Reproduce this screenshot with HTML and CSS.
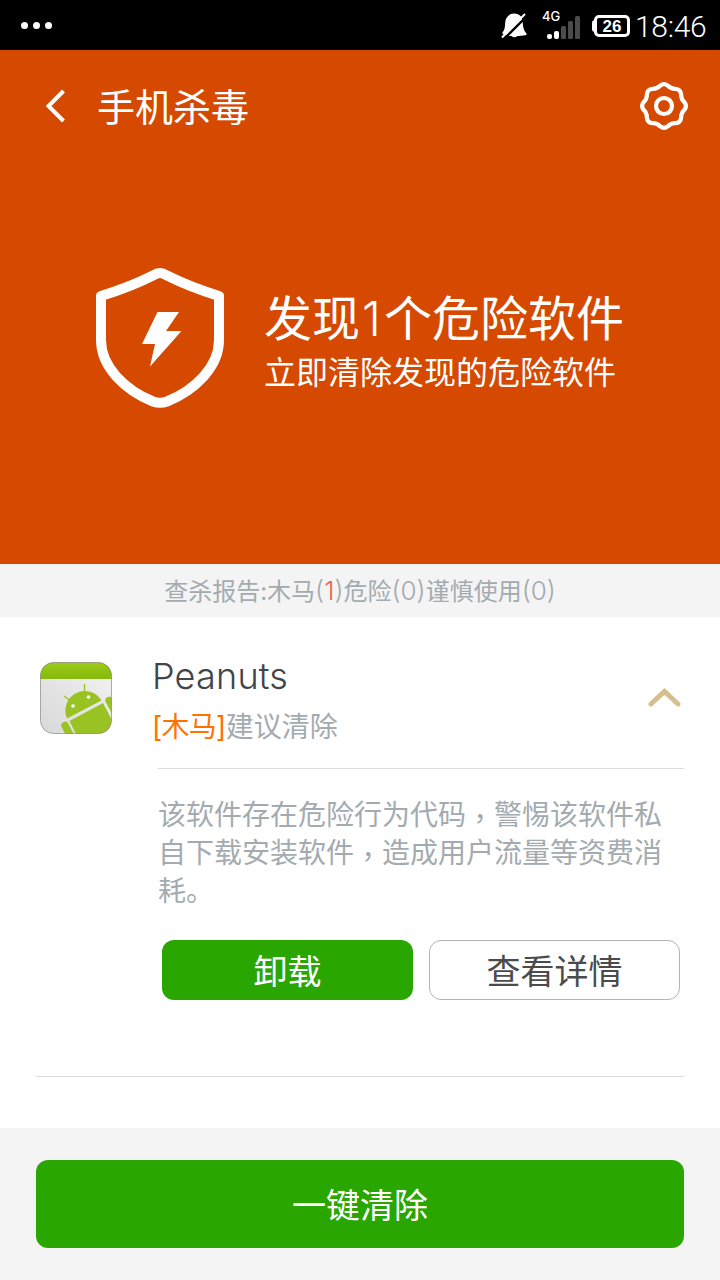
FILE: index.html
```html
<!DOCTYPE html>
<html lang="zh-CN">
<head>
<meta charset="utf-8">
<title>手机杀毒</title>
<link rel="stylesheet" href="styles.css">
</head>
<body>
<div class="screen">
  <div class="status">
    <svg class="dots" width="32" height="8" viewBox="0 0 32 8" fill="#fff"><circle cx="3.500" cy="3.500" r="3.500"/><circle cx="15.500" cy="3.500" r="3.500"/><circle cx="27.500" cy="3.500" r="3.500"/></svg>
    <svg class="mute" width="28" height="28" viewBox="0 0 28 28">
      <path fill="#fff" d="M2.500 20.500C6.500 16 4 10 6.500 6Q9 1.500 14 1.500Q18.500 1.500 21 4.500C24 10 21.500 16.500 26.500 21.500V23Q20 24 17.500 24Q14 26.500 11.500 24Q6 24 2.500 22Z"/>
      <path stroke="#000" stroke-width="2.400" d="M4 27L27 4"/>
      <path stroke="#fff" stroke-width="2" d="M2 25.500L25 2"/>
    </svg>
    <div class="signal">
      <span class="network">4G</span>
      <svg width="34" height="24" viewBox="0 0 34 24"><g fill="#fff"><rect x="5" y="18" width="5" height="5" rx="2"/><rect x="12" y="15" width="5" height="8" rx="2"/></g><g fill="#4b4b4b"><rect x="19" y="10" width="5" height="13" rx="1.500"/><rect x="26" y="5" width="5" height="18" rx="1.500"/><rect x="33" y="0" width="5" height="23" rx="1.500"/></g></svg>
    </div>
    <div class="battery">26</div>
    <div class="clock">18:46</div>
  </div>
  <header class="hero">
    <div class="bar">
      <svg class="back" width="22" height="36" viewBox="0 0 22 36" fill="none" stroke="#fff" stroke-width="4"><path d="M19.500 3L4.500 18L19.500 33"/></svg>
      <h1 class="heading">手机杀毒</h1>
      <svg class="gear" width="50" height="50" viewBox="-25 -25 50 50" fill="none" stroke="#fff" stroke-width="4.200"><path d="M-4.020-20.200Q0-23.600 4.020-20.200Q7.040-17 11.450-17.130Q16.690-16.690 17.130-11.450Q17-7.040 20.200-4.020Q23.600 0 20.200 4.020Q17 7.040 17.130 11.450Q16.690 16.690 11.450 17.130Q7.040 17 4.020 20.200Q0 23.600-4.020 20.200Q-7.040 17-11.450 17.130Q-16.690 16.690-17.130 11.450Q-17 7.040-20.200 4.020Q-23.600 0-20.200-4.020Q-17-7.040-17.130-11.450Q-16.690-16.690-11.450-17.130Q-7.040-17-4.020-20.200Z"/><circle r="8"/></svg>
    </div>
    <div class="alert">
      <svg class="shield" width="128" height="142" viewBox="16 17 128 142"><path fill="none" stroke="#fff" stroke-width="10" stroke-linejoin="round" d="M80 23Q77 23 73 25.500Q50 37 21 46V90C21 117 45 140 73 151.500Q80 154 87 151.500C115 140 139 117 139 90V46Q110 37 87 25.500Q83 23 80 23Z"/><path fill="#fff" d="M77.500 62H99L86 81H101.500L70 116.500L75 94H62Z"/></svg>
      <div class="message">
        <div class="found">发现<span class="digit">1</span>个危险软件</div>
        <div class="advice">立即清除发现的危险软件</div>
      </div>
    </div>
  </header>
  <div class="report">查杀报告:木马<span class="num">(<span class="count">1</span>)</span>危险<span class="num">(0)</span>谨慎使用<span class="num">(0)</span></div>
  <main class="list">
    <section class="item">
      <div class="summary">
        <svg class="app" width="72" height="73" viewBox="0 0 72 73">
          <defs>
            <clipPath id="tile"><rect x="0.500" y="0.500" width="71" height="71" rx="13"/></clipPath>
            <linearGradient id="paper" x1="1" y1="0" x2="0" y2="1"><stop offset="0" stop-color="#f3f3f3"/><stop offset="1" stop-color="#d8d8d8"/></linearGradient>
            <linearGradient id="band" x1="0" y1="0" x2="0" y2="1"><stop offset="0" stop-color="#9ccb17"/><stop offset="1" stop-color="#86b90e"/></linearGradient>
          </defs>
          <g clip-path="url(#tile)">
            <rect width="72" height="73" fill="url(#paper)"/>
            <rect width="72" height="17" fill="url(#band)"/>
            <g fill="#99c322">
              <path d="M27 56.500A19.500 19.500 0 0 1 61.500 38.500Z"/>
              <path d="M29.500 59L63 41L80 73V80H40Z"/>
            </g>
            <path fill="none" stroke="#99c322" stroke-width="7.500" stroke-linecap="round" d="M25 63.500L33.500 79.500M69 38.500L77.500 54"/>
            <path stroke="#99c322" stroke-width="1.400" d="M44.500 31V22M31 39L24 34"/>
            <circle cx="48.500" cy="35" r="1.800" fill="#fff"/><circle cx="33" cy="44" r="1.800" fill="#fff"/>
          </g>
          <rect x="0.500" y="0.500" width="71" height="71" rx="13" fill="none" stroke="#777" stroke-opacity="0.600"/>
        </svg>
        <div class="info">
          <div class="name">Peanuts</div>
          <div class="verdict"><span class="tag">[木马]</span>建议清除</div>
        </div>
        <svg class="chevron" width="34" height="22" viewBox="0 0 34 22" fill="none" stroke="#d5bf8c" stroke-width="5"><path stroke-linecap="round" d="M4 18L17.500 5.500L31 18"/></svg>
      </div>
      <div class="detail">
        <p class="description">该软件存在危险行为代码<span class="comma" lang="zh-TW">，</span>警惕该软件私自下载安装软件<span class="comma" lang="zh-TW">，</span>造成用户流量等资费消耗。</p>
        <div class="actions">
          <button class="button primary">卸载</button>
          <button class="button secondary">查看详情</button>
        </div>
      </div>
    </section>
  </main>
  <footer class="footer"><button class="button primary clean">一键清除</button></footer>
</div>
</body>
</html>
```

FILE: styles.css
```css
* { box-sizing: border-box; }
body { margin: 0; background: #fff; font-family: Inter, "Noto Sans CJK SC", sans-serif; }
svg { display: block; flex: none; }
.screen { width: 720px; height: 1280px; display: flex; flex-direction: column; overflow: hidden; }
.status { height: 50px; flex: none; background: #000; color: #fff; display: flex; align-items: center; padding: 2px 12px 0 21px; }
.mute { margin-left: auto; }
.signal { width: 40px; height: 30px; margin: 0 12px 0 14px; padding-top: 5px; position: relative; }
.signal svg { overflow: visible; }
.network { position: absolute; left: 0; top: -2px; font: 500 13px/14px Inter, sans-serif; }
.battery { width: 36px; height: 22px; margin-right: 5px; border: 3px solid #fff; border-radius: 5px; font: bold 17px/17px "Liberation Sans", sans-serif; text-align: center; position: relative; }
.battery::before { content: ""; position: absolute; left: -5px; top: 2px; width: 4px; height: 12px; border-radius: 3px 0 0 3px; background: #fff; }
.clock { width: 73px; padding-top: 2px; font: 300 30px/36px Roboto, sans-serif; letter-spacing: -0.3px; white-space: nowrap; }
.hero { height: 514px; flex: none; background: #d54900; color: #fff; }
.bar { height: 112px; display: flex; align-items: center; padding: 0 31px 0 44px; }
.heading { margin: 0 auto 0 31px; padding-top: 1px; font-size: 38px; line-height: 50px; font-weight: 400; }
.alert { display: flex; gap: 40px; padding: 105px 0 0 96px; }
.message { padding-top: 22px; white-space: nowrap; }
.found { font-size: 48px; line-height: 60px; }
.digit { font-weight: 300; padding: 0 3px 0 2px; }
.advice { font-size: 32px; line-height: 48px; }
.report { height: 53px; flex: none; background: #f4f4f4; color: #a3abb0; font-size: 24px; line-height: 55px; text-align: center; white-space: nowrap; }
.num { font-size: 26px; font-weight: 300; line-height: 30px; }
.count { color: #f0604e; }
.list { height: 511px; flex: none; padding: 0 36px; }
.item { height: 460px; border-bottom: 1px solid #dcdcdc; }
.summary { display: flex; height: 151px; padding: 45px 3px 0 4px; }
.info { margin: -6px auto 0 40px; }
.name { color: #41444b; font-size: 36px; line-height: 40px; font-weight: 300; letter-spacing: 0.2px; }
.verdict { color: #a3abb0; font-size: 28px; line-height: 40px; margin-top: 11px; }
.tag { color: #ff7200; letter-spacing: -0.7px; }
.chevron { margin-top: 24px; }
.detail { margin-left: 122px; border-top: 1px solid #dcdcdc; padding-top: 25px; }
.description { margin: 0 0 32px; color: #a3abb0; font-family: "Noto Sans CJK SC", sans-serif; font-size: 28px; line-height: 38px; width: 510px; }
.comma { font-family: "Noto Sans CJK TC", sans-serif; line-height: 28px; vertical-align: -4px; }
.actions { display: grid; grid-template-columns: 251px 251px; gap: 16px; padding-left: 4px; }
.button { height: 60px; padding: 3px 0 0; border: 0; border-radius: 12px; font: 34px/44px Inter, "Noto Sans CJK SC", sans-serif; }
.primary { background: #2aa600; color: #fff; }
.secondary { background: #fff; color: #4b4b4b; border: 1px solid #b4b4b4; }
.footer { height: 152px; flex: none; background: #f4f4f4; padding: 32px 36px; display: flex; }
.clean { flex: 1; height: 88px; }
```
